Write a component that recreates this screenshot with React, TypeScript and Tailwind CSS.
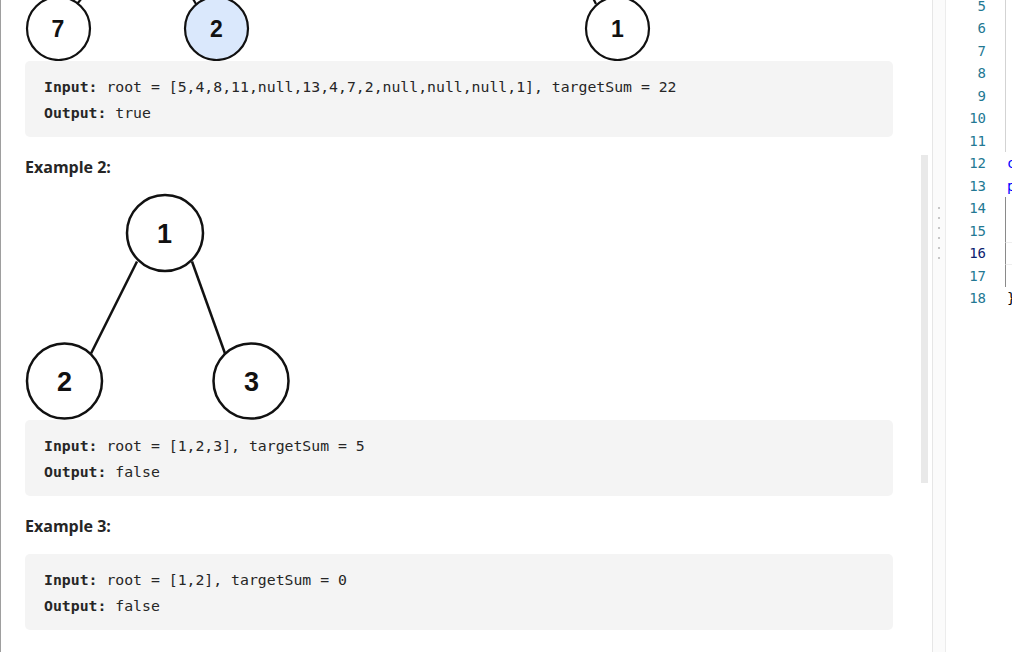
const mono = "font-['DejaVu_Sans_Mono',monospace]";

type Ex = { input: string; output: string };

function ExampleBox({ input, output }: Ex) {
  return (
    <div
      className={`rounded-[5px] bg-[#f4f4f4] pt-[13px] pb-[11px] pl-[19px] text-[14.8px] leading-[26px] text-[#262626] whitespace-pre ${mono}`}
    >
      <div>
        <span className="font-bold">Input:</span> {input}
      </div>
      <div>
        <span className="font-bold">Output:</span> {output}
      </div>
    </div>
  );
}

function Heading({ children, last }: { children: string; last?: boolean }) {
  return (
    <div
      className={`mt-[17.5px] ${last ? "mb-[16px]" : ""} text-[16px] leading-[24px] font-bold text-[#262626] font-['Open_Sans',sans-serif]`}
    >
      {children}
    </div>
  );
}

const nodeFont = { fontFamily: "'Liberation Sans', Arial, sans-serif", fontWeight: 700 };

// top of the first example's tree, cut off by the scroll position
function TopTree() {
  return (
    <svg width={700} height={61} viewBox="25 0 700 61" className="block">
      <g stroke="#111" strokeWidth={2.2} fill="none">
        <line x1={77} x2={87} y1={4} y2={-8} />
        <line x1={196} x2={189} y1={4} y2={-8} />
        <line x1={596} x2={590} y1={4} y2={-8} />
        <circle cx={58.5} cy={28.5} r={31.5} fill="#fff" />
        <circle cx={216.5} cy={28.5} r={31.5} fill="#dae8fc" />
        <circle cx={617.5} cy={28.5} r={31.5} fill="#fff" />
      </g>
      <g fill="#111" fontSize={23} textAnchor="middle" style={nodeFont}>
        <text x={58} y={37.3}>7</text>
        <text x={216.5} y={37.3}>2</text>
        <text x={617.5} y={37.3}>1</text>
      </g>
    </svg>
  );
}

function SmallTree() {
  return (
    <svg width={300} height={241.5} viewBox="25 178.5 300 241.5" className="block">
      <g stroke="#111" strokeWidth={2.5} fill="none">
        <line x1={137} y1={261} x2={91} y2={353} />
        <line x1={192} y1={261} x2={225} y2={353} />
        <circle cx={165} cy={232.5} r={38} />
        <circle cx={64.5} cy={380.5} r={37.5} />
        <circle cx={251} cy={380.5} r={37.5} />
      </g>
      <g fill="#111" fontSize={27} textAnchor="middle" style={nodeFont}>
        <text x={164.5} y={242.5}>1</text>
        <text x={64.5} y={390.5}>2</text>
        <text x={251.5} y={390.5}>3</text>
      </g>
    </svg>
  );
}

type CodeLine = { n: number; text: string; kw?: string; guide?: "light" | "dark" };

const code: CodeLine[] = [
  { n: 5, text: " *     TreeNode *left;", guide: "light" },
  { n: 6, text: " *     TreeNode *right;", guide: "light" },
  { n: 7, text: " *     TreeNode() : val(0), left(nullptr), right(nullptr) {}", guide: "light" },
  { n: 8, text: " *     TreeNode(int x) : val(x), left(nullptr), right(nullptr) {}", guide: "light" },
  { n: 9, text: " *     TreeNode(int x, TreeNode *left, TreeNode *right) {}", guide: "light" },
  { n: 10, text: " * };", guide: "light" },
  { n: 11, text: " */", guide: "light" },
  { n: 12, kw: "class", text: " Solution {" },
  { n: 13, kw: "public", text: ":" },
  { n: 14, text: "    bool hasPathSum(TreeNode* root, int targetSum) {", guide: "dark" },
  { n: 15, text: "", guide: "dark" },
  { n: 16, text: "", guide: "dark" },
  { n: 17, text: "    }", guide: "dark" },
  { n: 18, text: "};" },
];

function Editor() {
  return (
    <div className={`flex-1 min-w-0 overflow-hidden bg-white text-[14px] ${mono}`}>
      <div className="mt-[-5.5px]">
        {code.map((l) => (
          <div key={l.n} className="flex h-[22.5px] leading-[22.5px]">
            <div
              className={`w-[40px] shrink-0 text-right ${l.n === 16 ? "text-[#0b216f]" : "text-[#237893]"}`}
            >
              {l.n}
            </div>
            <div
              className={`ml-[19px] flex-1 whitespace-pre pl-[1px] border-l ${
                l.guide === "light"
                  ? "border-l-[#d3d3d3]"
                  : l.guide === "dark"
                  ? "border-l-[#8a8a8a]"
                  : "border-l-transparent"
              } ${l.n === 16 ? "border-y border-y-[#eeeeee] leading-[20.5px]" : ""} ${
                l.guide === "light" ? "text-[#008000]" : "text-[#000]"
              }`}
            >
              {l.kw && <span className="text-[#0000ff]">{l.kw}</span>}
              {l.text}
            </div>
          </div>
        ))}
      </div>
    </div>
  );
}

export default function App() {
  return (
    <div className="flex h-[652px] w-[1012px] overflow-hidden bg-white">
      {/* description panel */}
      <div className="relative h-full w-[932px] shrink-0 overflow-hidden border-l border-[#9e9e9e]">
        <div className="pl-6 pr-[39px]">
          <TopTree />
          <ExampleBox
            input="root = [5,4,8,11,null,13,4,7,2,null,null,null,1], targetSum = 22"
            output="true"
          />
          <Heading>Example 2:</Heading>
          <SmallTree />
          <ExampleBox input="root = [1,2,3], targetSum = 5" output="false" />
          <Heading last>Example 3:</Heading>
          <ExampleBox input="root = [1,2], targetSum = 0" output="false" />
        </div>
        {/* scrollbar thumb */}
        <div className="absolute right-[4px] top-[155px] h-[328px] w-[7px] bg-[#e9e9e9]" />
      </div>

      {/* resize handle */}
      <div className="flex h-full w-[14px] shrink-0 flex-col items-center border-x border-l-[#e6e6e6] border-r-[#ececec] bg-[#fbfbfb] pt-[207px]">
        <div className="flex flex-col gap-[8.5px]">
          {[0, 1, 2, 3, 4, 5].map((i) => (
            <div key={i} className="h-[1.5px] w-[1.5px] rounded-full bg-[#b5b5b5]" />
          ))}
        </div>
      </div>

      <Editor />
    </div>
  );
}
